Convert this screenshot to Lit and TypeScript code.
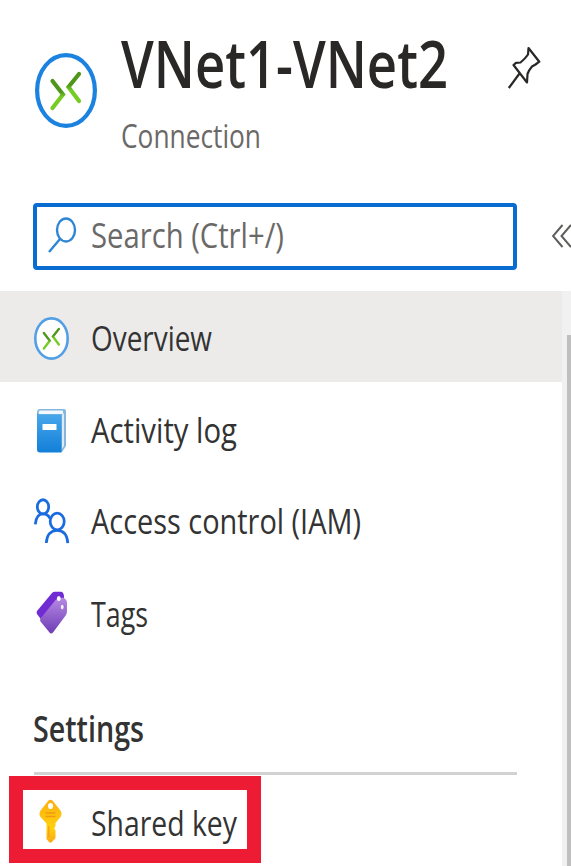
import { LitElement, html, css } from "lit";
import { customElement, property } from "lit/decorators.js";

/** A line of text condensed to a set width. */
@customElement("fit-text")
class FitText extends LitElement {
  @property() text = "";
  @property({ type: Number }) width = 100;
  @property({ type: Number }) size = 36;

  static styles = css`
    :host { display: block; }
    svg { display: block; overflow: visible; }
    text { font-family: "Open Sans", "Noto Sans", sans-serif; fill: currentColor; }
  `;

  render() {
    const h = Math.round(this.size * 1.4);
    return html`<svg width=${this.width} height=${h}>
      <text x="0" y=${this.size * 1.07} font-size=${this.size} textLength=${this.width} lengthAdjust="spacingAndGlyphs">${this.text}</text>
    </svg>`;
  }
}

const connection = (w: number, h: number, stroke: number, color: string) => html`
  <svg width=${w} height=${h} viewBox="0 0 62 75" preserveAspectRatio="none">
    <defs>
      <linearGradient id="g" x1="0" y1="0" x2="0" y2="1">
        <stop offset=".4" stop-color="#4f961a" /><stop offset=".6" stop-color="#76cc25" />
      </linearGradient>
    </defs>
    <ellipse cx="31" cy="37.5" rx=${31 - stroke / 2} ry=${37.5 - stroke / 2} fill="#fff" stroke=${color} stroke-width=${stroke} />
    <path d="M17.5 28 28 41.5 17.5 55" fill="none" stroke="url(#g)" stroke-width="4.2" stroke-linecap="round" />
    <path d="M44 21 33.5 34 44 48" fill="none" stroke="url(#g)" stroke-width="4.2" stroke-linecap="round" />
  </svg>`;

const book = html`<svg width="31" height="46" viewBox="0 0 31 46">
  <defs><linearGradient id="b" x1="0" y1="0" x2="0" y2="1"><stop stop-color="#4aa8ec" /><stop offset="1" stop-color="#127fd8" /></linearGradient></defs>
  <path d="M4 1H28Q30 1 30 4V38L26 44H4Q1 44 1 40V5Q1 1 4 1Z" fill="#86b6dc" />
  <path d="M4 2.5H27V6H3Q2 3 4 2.5Z" fill="#f2f8fd" />
  <path d="M28 5V38L26 41V7Z" fill="#dcebf7" />
  <path d="M1 5Q2 6.500 4 6.500H25.500V44.500H4Q1 44.500 1 41Z" fill="url(#b)" />
  <rect x="6.500" y="16" width="14" height="6" rx=".6" fill="#fff" />
</svg>`;

const people = html`<svg width="36" height="46" viewBox="0 0 38 47" preserveAspectRatio="none" fill="none" stroke="#1b6be0" stroke-width="2.900">
  <ellipse cx="9.500" cy="9" rx="6" ry="7.200" />
  <path d="M1.400 27C2 20 5 16.300 9.500 16.300C13.500 16.300 15.500 18 17 21" />
  <ellipse cx="24.500" cy="24" rx="7.400" ry="8.500" />
  <path d="M13 46C13.500 38 17.500 33 24.500 33C31.500 33 35 38 35.700 46" />
</svg>`;

const tag = html`<svg width="32" height="44" viewBox="0 0 32 44">
  <defs>
    <linearGradient id="t" x1="0" y1="0" x2="0" y2="1"><stop stop-color="#b78ae4" /><stop offset="1" stop-color="#6e3db5" /></linearGradient>
  </defs>
  <path d="M16 2Q17 .8 19 .8H25Q27.500 1 28 5L28 14 7 31 1 23Q.2 21.500 1 20Z" fill="#712bd3" />
  <path d="M20 8.500 27 6.500Q31 8 31 12V20Q31 22 30 24L17 41.500Q15 43.500 13.500 41.500L4.500 30.500Q3.500 29 4.500 27.500Z" fill="url(#t)" />
  <ellipse cx="22.800" cy="7.400" rx="1.900" ry="2.500" fill="#fff" />
  <ellipse cx="26.200" cy="16" rx="1.900" ry="2.700" fill="#f6eefe" stroke="#8655bd" stroke-width=".6" />
</svg>`;

const key = html`<svg width="23" height="44" viewBox="0 0 23 44">
  <defs><linearGradient id="k" x1="0" y1="0" x2="0" y2="1"><stop stop-color="#fcaf10" /><stop offset=".65" stop-color="#ffd00e" /><stop offset="1" stop-color="#fba915" /></linearGradient></defs>
  <path d="M9.500 1.500Q11.500 0 13.500 1.500L21.500 11.500Q23.500 15 21.500 18L16.500 24V27L15.200 29.500 16.500 31.500V39L12.500 43.500H10.500L7.500 40V24.500L1.500 18Q-.5 15 1.500 11.500Z" fill="url(#k)" />
  <path d="M6.500 14H16.500M6.500 17.500H16.500" stroke="#f09a0c" stroke-width="1.700" />
  <path d="M9.800 27V38" stroke="#f5a30d" stroke-width="1.300" />
  <ellipse cx="11.500" cy="7" rx="2.500" ry="3.100" fill="#fff" />
</svg>`;

const items = [
  { label: "Overview", width: 121, icon: connection(35, 43, 4.6, "#539fe5"), cls: "active" },
  { label: "Activity log", width: 146, icon: book, cls: "activity" },
  { label: "Access control (IAM)", width: 270, icon: people, cls: "access" },
  { label: "Tags", width: 57, icon: tag, cls: "tags" },
];

@customElement("app-root")
class AppRoot extends LitElement {
  static styles = css`
    :host { display: block; width: 571px; height: 866px; overflow: hidden; background: #fff; color: #333; }
    * { box-sizing: border-box; }
    svg { display: block; flex: none; }
    header { display: flex; height: 203px; padding-left: 35px; }
    .logo { margin-top: 53px; width: 62px; }
    .titles { margin-left: 24px; width: 386px; }
    .title { margin-top: 18px; color: #292827; font-weight: 550; height: 91px; }
    .subtitle { margin-top: 4px; color: #6b6967; }
    .pin { margin-top: 46px; }
    .bar { display: flex; align-items: center; height: 67px; padding-left: 33px; }
    .search { width: 484px; height: 67px; border: 4px solid #086cd0; border-radius: 4px; display: flex; align-items: flex-start; padding: 10px 0 0 11px; color: #6b6967; }
    .search fit-text { margin: -6px 0 0 14px; }
    .collapse { margin: -2px 0 0 35px; }
    .body { display: flex; margin-top: 21px; height: 575px; }
    .menu { width: 562px; flex: none; }
    .row { display: flex; align-items: center; height: 91.500px; padding-left: 34px; }
    .row.active { background: #edebe9; height: 91px; }
    .row .icon { width: 57px; display: flex; }
    .active .icon { margin-top: 3px; }
    .active fit-text { margin-top: 3px; }
    .activity .icon { padding-left: 2px; margin-top: 6px; }
    .activity fit-text { margin-top: 5px; }
    .access .icon { margin-top: 3px; }
    .access fit-text { margin-top: 3px; }
    .tags .icon { padding-left: 2px; margin-top: 5px; }
    .tags fit-text { margin-top: 7px; }
    .heading { height: 115px; padding: 47px 0 0 33px; font-weight: 550; }
    .rule { width: 483px; height: 3px; margin-left: 34px; background: #d2d2d2; }
    .callout { width: 252px; height: 87px; margin: 1px 0 0 9px; border: 14px solid #ee1b34; display: flex; align-items: center; padding-left: 16px; }
    .callout svg { margin-top: 4px; }
    .callout fit-text { margin: 7px 0 0 29px; }
    .track { flex: 1; background: #f1f1f1; padding: 44px 0 0 5px; }
    .thumb { height: 100%; background: #bfbfbf; }
  `;

  render() {
    return html`
      <header>
        <div class="logo">${connection(62, 75, 4.2, "#1b82df")}</div>
        <div class="titles">
          <fit-text class="title" text="VNet1-VNet2" .width=${327} .size=${65}></fit-text>
          <fit-text class="subtitle" text="Connection" .width=${140} .size=${33}></fit-text>
        </div>
        <svg class="pin" width="34" height="44" viewBox="0 0 34 44" fill="none" stroke="#292827" stroke-width="2.200" stroke-linejoin="round">
          <path d="M21.500 2 32.300 15.700 28.500 18.500 25 20.500Q22 24 20.500 28L20 36.500 6.500 19 9 16.800 13.500 16.500Q18 13 21 8.500ZM12.500 27.500 1.800 42" />
        </svg>
      </header>
      <div class="bar">
        <div class="search">
          <svg width="29" height="37" viewBox="0 0 29 37" fill="none" stroke="#2f86d4" stroke-width="2.400">
            <ellipse cx="18" cy="13" rx="9" ry="11.500" /><path d="M12 22 1 35" />
          </svg>
          <fit-text text="Search (Ctrl+/)" .width=${193} .size=${34.5}></fit-text>
        </div>
        <svg class="collapse" width="19" height="24" viewBox="0 0 19 24" fill="none" stroke="#5f5e5c" stroke-width="2">
          <path d="M10.500 1 1 12 10.500 23M19 1 9.500 12 19 23" />
        </svg>
      </div>
      <div class="body">
        <nav class="menu">
          ${items.map(
            (i) => html`<div class="row ${i.cls}">
              <div class="icon">${i.icon}</div>
              <fit-text .text=${i.label} .width=${i.width} .size=${35.5}></fit-text>
            </div>`
          )}
          <div class="heading"><fit-text text="Settings" .width=${111} .size=${35.5}></fit-text></div>
          <div class="rule"></div>
          <div class="callout">${key}<fit-text text="Shared key" .width=${146} .size=${35.5}></fit-text></div>
        </nav>
        <div class="track"><div class="thumb"></div></div>
      </div>
    `;
  }
}
